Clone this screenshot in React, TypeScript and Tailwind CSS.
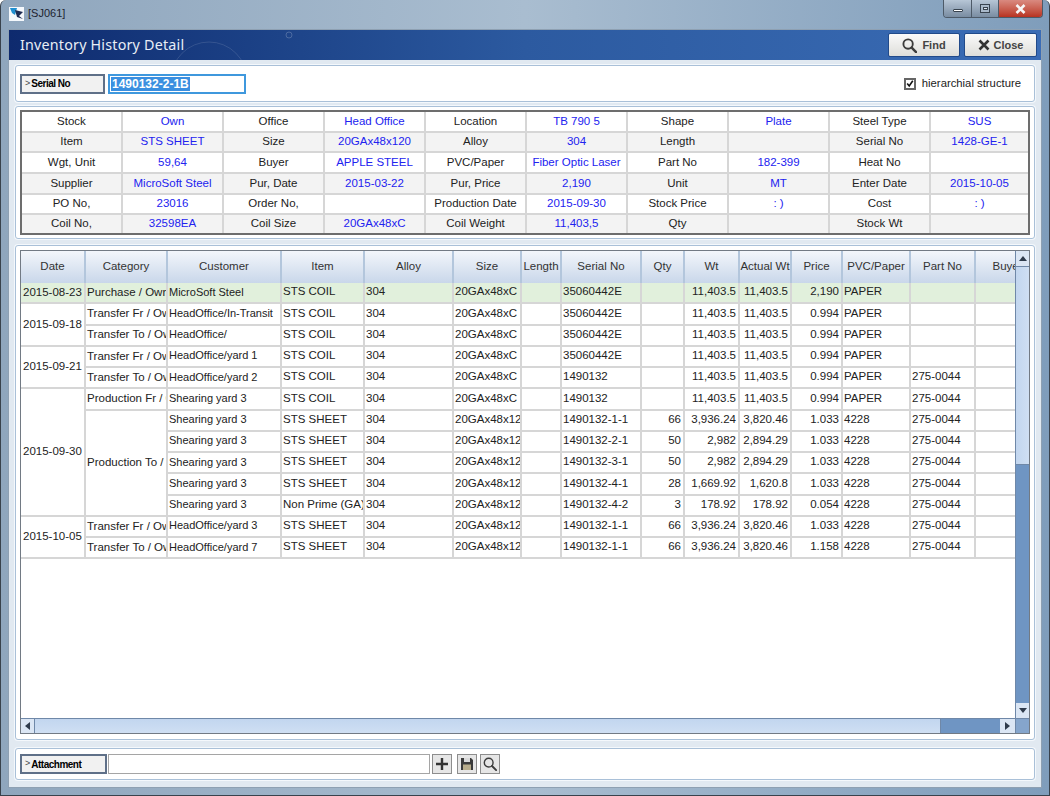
import React from "react";

const info: string[][] = [
  ["Stock", "Own", "Office", "Head Office", "Location", "TB 790 5", "Shape", "Plate", "Steel Type", "SUS"],
  ["Item", "STS SHEET", "Size", "20GAx48x120", "Alloy", "304", "Length", "", "Serial No", "1428-GE-1"],
  ["Wgt, Unit", "59,64", "Buyer", "APPLE STEEL", "PVC/Paper", "Fiber Optic Laser", "Part No", "182-399", "Heat No", ""],
  ["Supplier", "MicroSoft Steel", "Pur, Date", "2015-03-22", "Pur, Price", "2,190", "Unit", "MT", "Enter Date", "2015-10-05"],
  ["PO No,", "23016", "Order No,", "", "Production Date", "2015-09-30", "Stock Price", ": )", "Cost", ": )"],
  ["Coil No,", "32598EA", "Coil Size", "20GAx48xC", "Coil Weight", "11,403,5", "Qty", "", "Stock Wt", ""],
];
const infoWidths = [101, 101, 101, 101, 101, 101, 101, 101, 101, 97];

const widths = [65, 82, 114, 83, 89, 68, 40, 80, 43, 55, 52, 51, 68, 65, 65];
const headers = ["Date", "Category", "Customer", "Item", "Alloy", "Size", "Length", "Serial No", "Qty", "Wt", "Actual Wt", "Price", "PVC/Paper", "Part No", "Buyer"];

type Row = { date?: string; dateSpan?: number; cat?: string; catSpan?: number; v: string[]; green?: boolean };
const S = "STS SHEET";
const C = "STS COIL";
const A = "20GAx48xC";
const B = "20GAx48x120";
const E = "35060442E";
const W = "11,403.5";
const rows: Row[] = [
  { date: "2015-08-23", dateSpan: 1, cat: "Purchase / Own", catSpan: 1, green: true, v: ["MicroSoft Steel", C, "304", A, "", E, "", W, W, "2,190", "PAPER", "", ""] },
  { date: "2015-09-18", dateSpan: 2, cat: "Transfer Fr / Own", catSpan: 1, v: ["HeadOffice/In-Transit", C, "304", A, "", E, "", W, W, "0.994", "PAPER", "", ""] },
  { cat: "Transfer To / Own", catSpan: 1, v: ["HeadOffice/", C, "304", A, "", E, "", W, W, "0.994", "PAPER", "", ""] },
  { date: "2015-09-21", dateSpan: 2, cat: "Transfer Fr / Own", catSpan: 1, v: ["HeadOffice/yard 1", C, "304", A, "", E, "", W, W, "0.994", "PAPER", "", ""] },
  { cat: "Transfer To / Own", catSpan: 1, v: ["HeadOffice/yard 2", C, "304", A, "", "1490132", "", W, W, "0.994", "PAPER", "275-0044", ""] },
  { date: "2015-09-30", dateSpan: 6, cat: "Production Fr / Coil", catSpan: 1, v: ["Shearing yard 3", C, "304", A, "", "1490132", "", W, W, "0.994", "PAPER", "275-0044", ""] },
  { cat: "Production To / Sheet", catSpan: 5, v: ["Shearing yard 3", S, "304", B, "", "1490132-1-1", "66", "3,936.24", "3,820.46", "1.033", "4228", "275-0044", ""] },
  { v: ["Shearing yard 3", S, "304", B, "", "1490132-2-1", "50", "2,982", "2,894.29", "1.033", "4228", "275-0044", ""] },
  { v: ["Shearing yard 3", S, "304", B, "", "1490132-3-1", "50", "2,982", "2,894.29", "1.033", "4228", "275-0044", ""] },
  { v: ["Shearing yard 3", S, "304", B, "", "1490132-4-1", "28", "1,669.92", "1,620.8", "1.033", "4228", "275-0044", ""] },
  { v: ["Shearing yard 3", "Non Prime (GA)", "304", B, "", "1490132-4-2", "3", "178.92", "178.92", "0.054", "4228", "275-0044", ""] },
  { date: "2015-10-05", dateSpan: 2, cat: "Transfer Fr / Own", catSpan: 1, v: ["HeadOffice/yard 3", S, "304", B, "", "1490132-1-1", "66", "3,936.24", "3,820.46", "1.033", "4228", "275-0044", ""] },
  { cat: "Transfer To / Own", catSpan: 1, v: ["HeadOffice/yard 7", S, "304", B, "", "1490132-1-1", "66", "3,936.24", "3,820.46", "1.158", "4228", "275-0044", ""] },
];

const rightAligned = new Set([6, 7, 8, 9]);

function Panel({ className, children }: { className: string; children: React.ReactNode }) {
  return (
    <div className={"rounded-[3px] border border-[#a9c0d8] bg-white shadow-[0_0_0_1px_#f4f8fc] " + className}>{children}</div>
  );
}

function LabelBox({ text, w }: { text: string; w: string }) {
  return (
    <div className={"flex h-[20px] items-center border-2 border-[#5f7088] bg-[#f1f1f1] pl-[3px] text-[10px] font-bold text-black " + w}>
      <span className="mr-[1px] text-[9px] font-normal text-[#444]">&gt;</span>
      <span className="tracking-[-0.5px]">{text}</span>
    </div>
  );
}

function Magnifier({ size, sw = 2 }: { size: number; sw?: number }) {
  return (
    <svg width={size} height={size} viewBox="0 0 16 16" fill="none" stroke="#3c3c3c" strokeWidth={sw}>
      <circle cx="6.5" cy="6.5" r="5" />
      <path d="M10.3 10.3 L15 15" strokeWidth={sw + 0.6} strokeLinecap="round" />
    </svg>
  );
}

export default function App() {
  return (
    <div
      className="relative flex h-[796px] w-[1050px] flex-col overflow-hidden rounded-t-[6px] border-x border-b border-[#39424c] bg-gradient-to-r from-[#8fa6bd] via-[#a9bdd0] to-[#7f9dbb] font-['Liberation_Sans',sans-serif] text-[12px]"
    >
      {/* window title */}
      <div className="relative flex h-[29px] shrink-0 items-center pl-[8px] pb-[2px]">
        <svg width="16" height="16" viewBox="0 0 16 16" className="mr-[3px]">
          <rect x="0" y="1" width="15" height="14" fill="#f4f8fc" />
          <path d="M1 2 L8 2 L6 9 L3 7 Z" fill="#1f8fd0" />
          <path d="M6 4 L14 6 L10 10 L14 13 L8 11 Z" fill="#1d2b52" />
        </svg>
        <span className="text-[11px] text-[#1d2430]">[SJ061]</span>
        <div className="absolute right-[6px] top-0 flex h-[18px] overflow-hidden rounded-b-[4px] border border-t-0 border-[#4d5a68]">
          <div className="flex w-[27px] items-center justify-center bg-gradient-to-b from-[#b7c6d6] to-[#7a8da2]">
            <div className="mt-[4px] h-[3px] w-[10px] rounded-[1px] border border-[#38434f] bg-white" />
          </div>
          <div className="flex w-[27px] items-center justify-center border-l border-[#4d5a68] bg-gradient-to-b from-[#b7c6d6] to-[#7a8da2]">
            <div className="flex h-[9px] w-[10px] items-center justify-center border border-[#38434f] bg-[#a9b9ca]">
              <div className="h-[3px] w-[5px] border border-[#38434f] bg-[#dfe6ee]" />
            </div>
          </div>
          <div className="flex w-[44px] items-center justify-center border-l border-[#4d5a68] bg-gradient-to-b from-[#d98a80] to-[#b8311f]">
            <svg width="11" height="10" viewBox="0 0 11 10">
              <path d="M1.5 1 L9.5 9 M9.5 1 L1.5 9" stroke="#f6f6f6" strokeWidth="2.6" />
            </svg>
          </div>
        </div>
      </div>

      {/* client area */}
      <div className="mx-[7px] mb-[7px] flex min-h-0 flex-1 flex-col border border-[#8ea0b2] bg-[#e1e9f1]">
        {/* banner */}
        <div className="relative flex h-[30px] shrink-0 items-center justify-between overflow-hidden bg-gradient-to-r from-[#0e2a6e] via-[#2c5aa0] to-[#3a6cb5] pl-[11px] pr-[4px]">
          <svg className="absolute left-[130px] top-0" width="260" height="30" viewBox="0 0 260 30" fill="none">
            <circle cx="70" cy="50" r="38" stroke="#ffffff" strokeOpacity="0.12" />
            <circle cx="150" cy="5" r="3" stroke="#ffffff" strokeOpacity="0.2" />
          </svg>
          <span className="relative font-['Noto_Sans',sans-serif] text-[14.3px] tracking-[0.2px] text-[#e8eef6]">Inventory History Detail</span>
          <div className="relative flex gap-[4px]">
            <button className="flex h-[24px] w-[72px] items-center justify-center gap-[5px] rounded-[2px] border border-[#214a8a] bg-gradient-to-b from-[#fafafa] to-[#dededa] text-[11px] font-bold text-[#444]">
              <Magnifier size={15} />
              Find
            </button>
            <button className="flex h-[24px] w-[73px] items-center justify-center gap-[4px] rounded-[2px] border border-[#214a8a] bg-gradient-to-b from-[#fafafa] to-[#dededa] text-[11px] font-bold text-[#444]">
              <svg width="12" height="12" viewBox="0 0 12 12">
                <path d="M1.5 1.5 L10.5 10.5 M10.5 1.5 L1.5 10.5" stroke="#333" strokeWidth="2.6" />
              </svg>
              Close
            </button>
          </div>
        </div>

        {/* serial row */}
        <Panel className="mx-[6px] mt-[5px] flex h-[37px] shrink-0 items-center justify-between pl-[4px] pr-[13px]">
          <div className="flex items-center gap-[3px]">
            <LabelBox text="Serial No" w="w-[85px]" />
            <div className="flex h-[20px] w-[138px] items-center border-2 border-[#3f98dd] bg-white pl-[1px]">
              <span className="bg-[#3a8fe0] px-[1px] text-[12px] font-bold leading-[14px] text-white">1490132-2-1B</span>
            </div>
          </div>
          <label className="flex items-center gap-[6px] text-[11.3px] text-[#222]">
            <span className="flex h-[12px] w-[12px] items-center justify-center border-2 border-[#666] bg-white">
              <svg width="9" height="9" viewBox="0 0 10 10" fill="none">
                <path d="M1.5 5 L4 8 L8.5 1.5" stroke="#111" strokeWidth="2" />
              </svg>
            </span>
            hierarchial structure
          </label>
        </Panel>

        {/* info */}
        <Panel className="mx-[6px] mt-[4px] h-[133px] shrink-0 pl-[4px] pt-[3px]">
          <table className="h-[125px] w-[1010px] table-fixed border-separate border-spacing-0 border-2 border-[#6d6d6d]">
            <colgroup>
              {infoWidths.map((w, i) => (
                <col key={i} style={{ width: w }} />
              ))}
            </colgroup>
            <tbody>
              {info.map((r, i) => (
                <tr key={i} className={i % 2 === 1 ? "bg-[#f3f3f3]" : "bg-white"}>
                  {r.map((c, j) => (
                    <td
                      key={j}
                      className={
                        "overflow-hidden whitespace-nowrap p-0 text-center text-[11.5px] leading-none " +
                        (j < 9 ? "border-r-2 border-[#d6d6d6] " : "") +
                        (i < 5 ? "border-b-2 border-[#d6d6d6] " : "") +
                        (j % 2 === 1 ? "text-[#2222f0]" : "text-[#222]")
                      }
                    >
                      {c}
                    </td>
                  ))}
                </tr>
              ))}
            </tbody>
          </table>
        </Panel>

        {/* grid */}
        <Panel className="mx-[6px] mt-[6px] h-[495px] shrink-0 pl-[4px] pt-[4px]">
          <div className="flex h-[484px] w-[1010px] flex-col border border-[#727a84]">
            <div className="flex min-h-0 flex-1">
              <div className="w-[994px] overflow-hidden">
                <table className="w-[1020px] table-fixed border-separate border-spacing-0">
                  <colgroup>
                    {widths.map((w, i) => (
                      <col key={i} style={{ width: w }} />
                    ))}
                  </colgroup>
                  <thead>
                    <tr>
                      {headers.map((h) => (
                        <th
                          key={h}
                          className="h-[32px] overflow-hidden whitespace-nowrap border-r-2 border-[#b3c6dc] bg-gradient-to-b from-[#f3f6fb] to-[#c9d7ea] p-0 text-center text-[11.5px] font-normal text-[#333]"
                        >
                          {h}
                        </th>
                      ))}
                    </tr>
                  </thead>
                  <tbody>
                    {rows.map((r, i) => (
                      <tr key={i} className={r.green ? "bg-[#e1f0dc]" : "bg-white"}>
                        {r.date && (
                          <td rowSpan={r.dateSpan} className="overflow-hidden whitespace-nowrap border-b-2 border-r-2 border-[#d6d6d6] p-0 pl-[2px] text-[11.5px] leading-none text-[#222]">
                            {r.date}
                          </td>
                        )}
                        {r.cat && (
                          <td rowSpan={r.catSpan} className="overflow-hidden whitespace-nowrap border-b-2 border-r-2 border-[#d6d6d6] p-0 pl-[1px] text-[11.5px] leading-none text-[#222]">
                            {r.cat}
                          </td>
                        )}
                        {r.v.map((c, j) => (
                          <td
                            key={j}
                            className={
                              "h-[21.25px] overflow-hidden whitespace-nowrap border-b-2 border-r-2 border-[#d6d6d6] p-0 pb-[1px] leading-none text-[#222] " +
                              (j === 0 ? "text-[11px] " : "text-[11.5px] ") +
                              (rightAligned.has(j) ? "pr-[2px] text-right" : "pl-[1px] text-left")
                            }
                          >
                            {c}
                          </td>
                        ))}
                      </tr>
                    ))}
                  </tbody>
                </table>
              </div>
              {/* vertical scrollbar */}
              <div className="flex w-[14px] flex-col border-l border-[#6f88a8] bg-[#6f95c3]">
                <div className="flex h-[15px] items-center justify-center bg-[#dbe6f4]">
                  <div className="h-0 w-0 border-x-[4px] border-b-[5px] border-x-transparent border-b-[#2f3b4c]" />
                </div>
                <div className="h-[199px] border-y border-[#6f88a8] bg-gradient-to-r from-[#c2d6ef] to-[#cfdff3]" />
                <div className="flex-1" />
                <div className="flex h-[15px] items-center justify-center bg-[#dbe6f4]">
                  <div className="h-0 w-0 border-x-[4px] border-t-[5px] border-x-transparent border-t-[#2f3b4c]" />
                </div>
              </div>
            </div>
            {/* horizontal scrollbar */}
            <div className="flex h-[15px] shrink-0 border-t border-[#6f88a8] bg-[#6f95c3]">
              <div className="flex w-[13px] items-center justify-center bg-[#dbe6f4]">
                <div className="h-0 w-0 border-y-[4px] border-r-[5px] border-y-transparent border-r-[#2f3b4c]" />
              </div>
              <div className="w-[907px] border-x border-[#6f88a8] bg-gradient-to-b from-[#c2d6ef] to-[#cfdff3]" />
              <div className="flex-1" />
              <div className="flex w-[15px] items-center justify-center bg-[#dbe6f4]">
                <div className="h-0 w-0 border-y-[4px] border-l-[5px] border-y-transparent border-l-[#2f3b4c]" />
              </div>
              <div className="w-[14px] border-l border-[#6f88a8] bg-[#85a5cc]" />
            </div>
          </div>
        </Panel>

        {/* attachment */}
        <Panel className="mx-[6px] mt-[8px] flex h-[32px] shrink-0 items-center pl-[4px]">
          <LabelBox text="Attachment" w="w-[87px]" />
          <div className="ml-[1px] h-[20px] w-[322px] border border-[#a5a5a5] bg-white" />
          <div className="ml-[2px] flex h-[20px] w-[20px] items-center justify-center border border-[#8d8d8d] bg-[#e6e6e6]">
            <svg width="14" height="14" viewBox="0 0 14 14">
              <path d="M7 1 V13 M1 7 H13" stroke="#333" strokeWidth="2.4" />
            </svg>
          </div>
          <div className="ml-[5px] flex h-[20px] w-[20px] items-center justify-center border border-[#8d8d8d] bg-[#e6e6e6]">
            <svg width="14" height="14" viewBox="0 0 14 14">
              <path d="M1 1 H11 L13 3 V13 H1 Z" fill="#3a3a3a" />
              <rect x="4" y="1" width="6" height="4" fill="#d9d9d9" />
              <rect x="3" y="7.5" width="8" height="5.5" fill="#b8ad8c" />
            </svg>
          </div>
          <div className="ml-[3px] flex h-[20px] w-[20px] items-center justify-center border border-[#8d8d8d] bg-[#e6e6e6]">
            <Magnifier size={14} sw={1.6} />
          </div>
        </Panel>
      </div>
    </div>
  );
}
